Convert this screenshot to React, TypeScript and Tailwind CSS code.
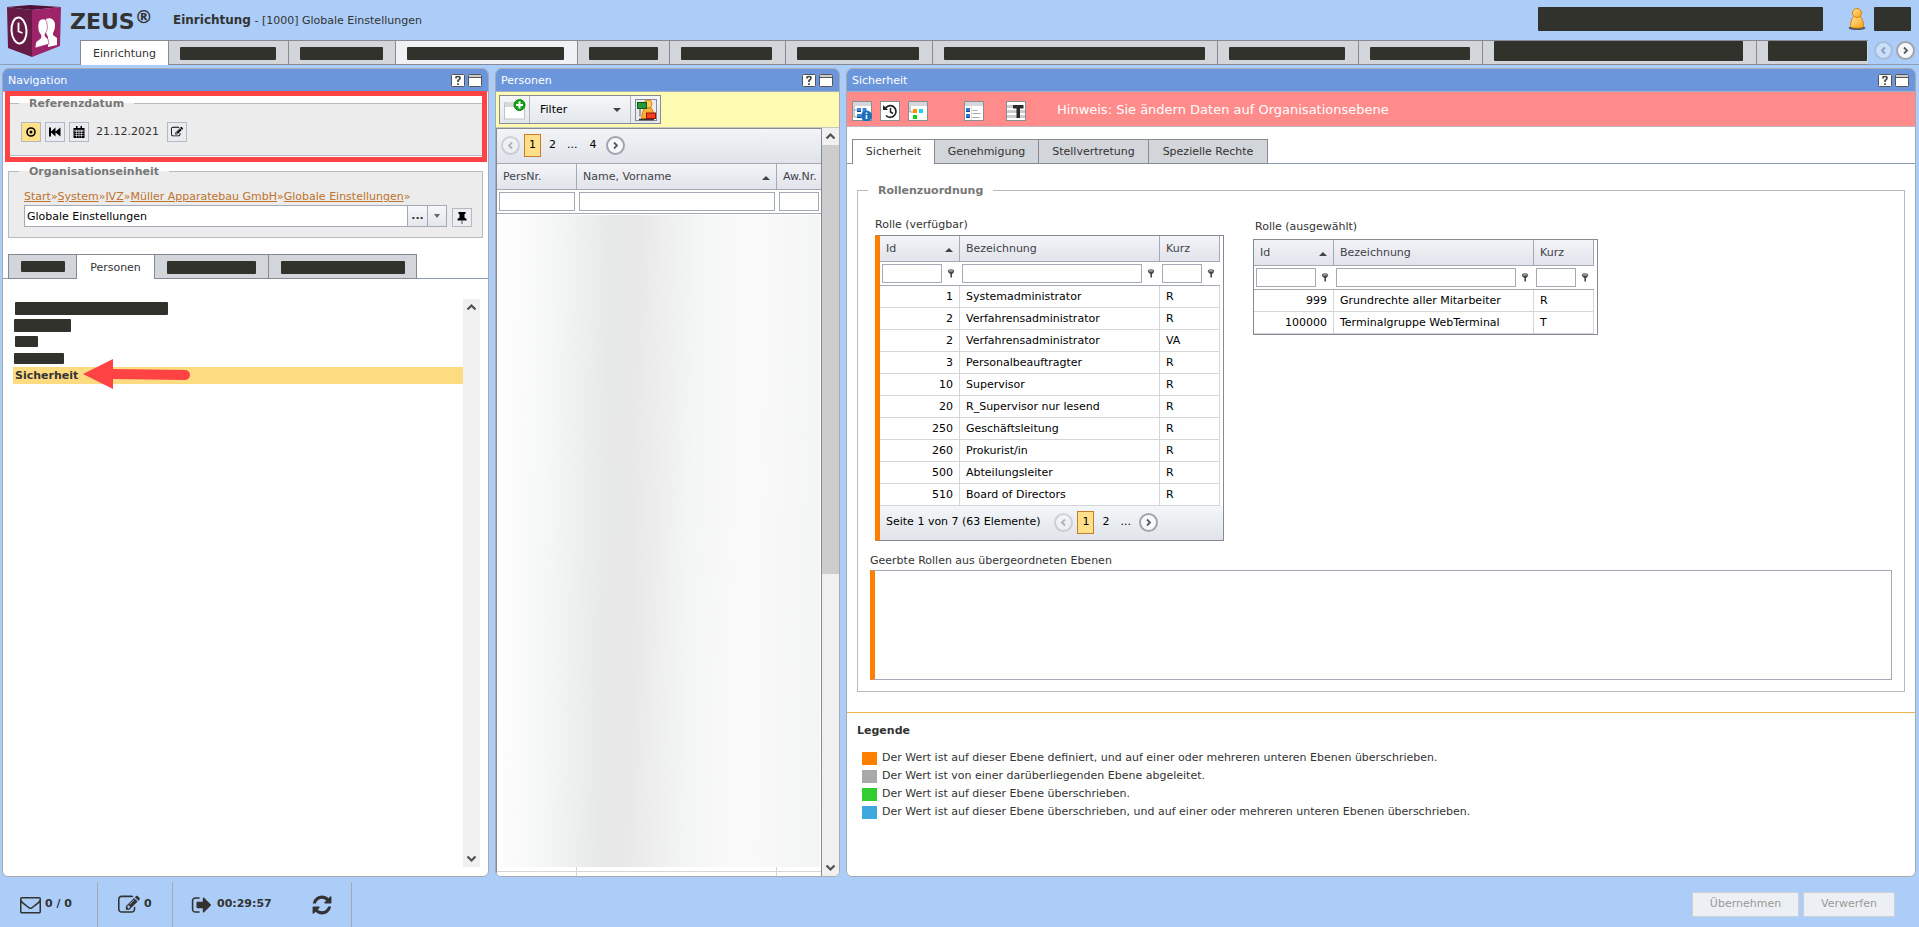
import type { ReactNode } from "react";
import clsx from "clsx";

// Black bars stand in for hidden labels
function Redacted({ className }: { className: string }) {
  return <span className={clsx("block shrink-0 rounded-[1px] bg-[#31322b]", className)} />;
}

const headerTabs = [
  { bar: "h-[13px] w-24", tab: "w-[120px]" },
  { bar: "h-[13px] w-[83px]", tab: "w-[107px]" },
  { bar: "h-[13px] w-[157px]", tab: "w-[182px]", hover: true },
  { bar: "h-[13px] w-[69px]", tab: "w-[92px]" },
  { bar: "h-[13px] w-[91px]", tab: "w-[116px]" },
  { bar: "h-[13px] w-[122px]", tab: "w-[147px]" },
  { bar: "h-[13px] w-[261px]", tab: "w-[285px]" },
  { bar: "h-[13px] w-[116px]", tab: "w-[141px]" },
  { bar: "h-[13px] w-[100px]", tab: "w-[124px]" },
  { bar: "h-5 w-[249px]", tab: "w-[274px]" },
  { bar: "h-5 w-[99px]", tab: "w-[111px]" },
];

const availableRoles = [
  ["1", "Systemadministrator", "R"],
  ["2", "Verfahrensadministrator", "R"],
  ["2", "Verfahrensadministrator", "VA"],
  ["3", "Personalbeauftragter", "R"],
  ["10", "Supervisor", "R"],
  ["20", "R_Supervisor nur lesend", "R"],
  ["250", "Geschäftsleitung", "R"],
  ["260", "Prokurist/in", "R"],
  ["500", "Abteilungsleiter", "R"],
  ["510", "Board of Directors", "R"],
];

const selectedRoles = [
  ["999", "Grundrechte aller Mitarbeiter", "R"],
  ["100000", "Terminalgruppe WebTerminal", "T"],
];

const legendItems = [
  { color: "bg-[#ff8000]", text: "Der Wert ist auf dieser Ebene definiert, und auf einer oder mehreren unteren Ebenen überschrieben." },
  { color: "bg-[#a9a9a9]", text: "Der Wert ist von einer darüberliegenden Ebene abgeleitet." },
  { color: "bg-[#32cd32]", text: "Der Wert ist auf dieser Ebene überschrieben." },
  { color: "bg-[#3fa9de]", text: "Der Wert ist auf dieser Ebene überschrieben, und auf einer oder mehreren unteren Ebenen überschrieben." },
];

const editPath =
  "M888 1184l116-116-152-152-116 116v56h96v96h56zm440-720q-16-16-33 1l-350 350q-17 17-1 33t33-1l350-350q17-17 1-33zm80 594v190q0 119-84.5 203.5t-203.5 84.5h-832q-119 0-203.5-84.5t-84.5-203.5v-832q0-119 84.5-203.5t203.5-84.5h832q63 0 117 25 15 7 18 23 3 17-9 29l-49 49q-14 14-32 8-23-6-45-6h-832q-66 0-113 47t-47 113v832q0 66 47 113t113 47h832q66 0 113-47t47-113v-126q0-13 9-22l64-64q15-15 35-7t20 29zm-96-738l288 288-672 672h-288v-288zm444 132l-92 92-288-288 92-92q28-28 68-28t68 28l152 152q28 28 28 68t-28 68z";
const refreshPath =
  "M1639 1056q0 5-1 7-64 268-268 434.5t-478 166.5q-146 0-282.5-55t-243.5-157l-129 129q-19 19-45 19t-45-19-19-45v-448q0-26 19-45t45-19h448q26 0 45 19t19 45-19 45l-137 137q71 66 161 102t187 36q134 0 250-65t186-179q11-17 53-117 8-23 30-23h192q13 0 22.5 9.5t9.5 22.5zm25-800v448q0 26-19 45t-45 19h-448q-26 0-45-19t-19-45 19-45l138-138q-148-137-349-137-134 0-250 65t-186 179q-11 17-53 117-8 23-30 23h-199q-13 0-22.5-9.5t-9.5-22.5v-7q65-268 270-434.5t480-166.5q146 0 284 55.5t245 156.5l130-129q19-19 45-19t45 19 19 45z";
const signOutPath =
  "M704 1440q0 4 1 20t.5 26.5-3 23.5-10 19.5-20.5 6.5h-320q-119 0-203.5-84.5t-84.5-203.5v-704q0-119 84.5-203.5t203.5-84.5h320q13 0 22.5 9.5t9.5 22.5q0 4 1 20t.5 26.5-3 23.5-10 19.5-20.5 6.5h-320q-66 0-113 47t-47 113v704q0 66 47 113t113 47h312l11.5 1 11.5 3 8 5.5 7 9 2 13.5zm928-544q0 26-19 45l-544 544q-19 19-45 19t-45-19-19-45v-288h-448q-26 0-45-19t-19-45v-384q0-26 19-45t45-19h448v-288q0-26 19-45t45-19 45 19l544 544q19 19 19 45z";
const mailPath =
  "M1664 1504v-768q-32 36-69 66-268 206-426 338-51 43-83 67t-86.5 48.5-102.5 24.5h-2q-48 0-102.5-24.5t-86.5-48.5-83-67q-158-132-426-338-37-30-69-66v768q0 13 9.5 22.5t22.5 9.5h1472q13 0 22.5-9.5t9.5-22.5zm0-1051v-24.5l-.5-13-3-12.5-5.5-9-9-7.5-14-2.5h-1472q-13 0-22.5 9.5t-9.5 22.5q0 168 147 284 193 152 401 317 6 5 35 29.5t46 37.5 44.5 31.5 50.5 27.5 43 9h2q20 0 43-9t50.5-27.5 44.5-31.5 46-37.5 35-29.5q208-165 401-317 54-43 100.5-115.5t46.5-131.5zm128-37v1088q0 66-47 113t-113 47h-1472q-66 0-113-47t-47-113v-1088q0-66 47-113t113-47h1472q66 0 113 47t47 113z";

function Glyph({ d, className }: { d: string; className: string }) {
  return (
    <svg viewBox="0 0 1792 1792" fill="currentColor" className={className} aria-hidden="true">
      <path d={d} />
    </svg>
  );
}

function Logo() {
  return (
    <svg viewBox="0 0 56 54" className="h-[54px] w-14 shrink-0" aria-hidden="true">
      <path d="M1 2 24 0 55 2 26 5Z" fill="#4f1236" />
      <path d="M1 2 26 5 26 52 2 43Z" fill="#651b45" />
      <path d="M26 5 55 2 54 41 26 52Z" fill="#9e2469" />
      <ellipse cx="13" cy="25.500" rx="7.500" ry="13" fill="none" stroke="#fff" strokeWidth="2" transform="rotate(-4 13 25.500)" />
      <path d="M12.500 17.500v9l4 1.500" fill="none" stroke="#fff" strokeWidth="1.800" />
      <path d="M40 14c4-2 9 0 9 6 0 4-1 6-2 8l0 2 4 3 0 7-9 2 0-10-4-8Z" fill="#fff" />
      <path d="M37 14c-4 0-5 4-5 8 0 3 1 6 3 8l0 3-5 4-1 6 14-4-1-5-3-3 0-2c2-3 3-6 2-10 0-3-1-5-4-5Z" fill="#fff" stroke="#9e2469" strokeWidth="0.600" />
    </svg>
  );
}

function UserIcon() {
  return (
    <svg viewBox="0 0 18 24" className="h-6 w-[18px] shrink-0" aria-hidden="true">
      <defs>
        <linearGradient id="user-body" x1="0" y1="0" x2="1" y2="1">
          <stop offset="0" stopColor="#ffe3a8" />
          <stop offset="1" stopColor="#f8a30c" />
        </linearGradient>
      </defs>
      <ellipse cx="9" cy="21" rx="8.500" ry="2" fill="#4c5b70" />
      <path d="M5.500 9.500h7c2 3 3 6 3 9 0 2-2 2.500-6.500 2.500S2.500 20.500 2.500 18.500c0-3 1-6 3-9Z" fill="url(#user-body)" stroke="#d98200" />
      <circle cx="9" cy="6" r="4.500" fill="url(#user-body)" stroke="#d98200" />
    </svg>
  );
}

function Chevron({ up }: { up?: boolean }) {
  return (
    <svg viewBox="0 0 17 17" className="block size-[17px]" aria-hidden="true">
      <path d={up ? "M4.500 10.500 8.500 6.500 12.500 10.500" : "M4.500 6.500 8.500 10.500 12.500 6.500"} fill="none" stroke="#505050" strokeWidth="2.200" />
    </svg>
  );
}

function RoundButton({ dir, disabled, label }: { dir: "left" | "right"; disabled?: boolean; label: string }) {
  return (
    <button
      type="button"
      aria-label={label}
      disabled={disabled}
      className={clsx(
        "flex size-[19px] shrink-0 items-center justify-center rounded-full border-2 border-[#a0a5ae] bg-[#f6f8fa]",
        disabled && "opacity-40"
      )}
    >
      <svg viewBox="0 0 9 9" className="size-[9px]" aria-hidden="true">
        <path d={dir === "left" ? "M6 1.500 3 4.500 6 7.500" : "M3 1.500 6 4.500 3 7.500"} fill="none" stroke="#555b66" strokeWidth="1.800" />
      </svg>
    </button>
  );
}

function SortArrow() {
  return <span className="border-x-4 border-b-4 border-x-transparent border-b-[#3f4247]" />;
}

function Panel({ title, className, children }: { title: string; className: string; children: ReactNode }) {
  return (
    <section className={clsx("flex min-h-0 flex-col overflow-hidden rounded-md border border-[#a6abb3] bg-white", className)}>
      <header className="flex h-[23px] shrink-0 items-center border-b border-[#a6b0c4] bg-[#6b96dc] pt-px pr-[6px] pl-[5px] text-white">
        <h2 className="grow pt-px text-[11px]">{title}</h2>
        <button type="button" aria-label="Hilfe" className="mr-[3px]">
          <svg viewBox="0 0 14 13" className="block h-[13px] w-[14px]" aria-hidden="true">
            <rect x="0.500" y="0.500" width="13" height="12" rx="1" fill="#fff" stroke="#555" />
            <path d="M5 4.500V3.500Q5 2.500 7 2.500T9 4Q9 5.500 7 6.500V8M7 9.200v1.800" fill="none" stroke="#444" strokeWidth="1.700" />
          </svg>
        </button>
        <button type="button" aria-label="Maximieren">
          <svg viewBox="0 0 14 13" className="block h-[13px] w-[14px]" aria-hidden="true">
            <rect x="0.500" y="0.500" width="13" height="12" rx="1" fill="#fff" stroke="#555" />
            <path d="M1 1h12v2H1z" fill="#ccc" />
            <path d="M1 3.500h12" stroke="#555" />
          </svg>
        </button>
      </header>
      {children}
    </section>
  );
}

function Group({ title, className, bodyClass, children }: { title: string; className?: string; bodyClass: string; children: ReactNode }) {
  return (
    <fieldset className={clsx("min-w-0 border border-[#b7bac1]", className)}>
      <legend className="ml-[10px] px-[10px] pt-0.5 text-[11px] leading-[14px] font-bold text-[#777]">{title}</legend>
      <div className={bodyClass}>{children}</div>
    </fieldset>
  );
}

function ToolButton({ label, active, children }: { label: string; active?: boolean; children: ReactNode }) {
  return (
    <button
      type="button"
      aria-label={label}
      className={clsx(
        "flex size-5 shrink-0 items-center justify-center border border-[#b4b9c2] text-black",
        active ? "bg-[#ffe08a]" : "bg-[#e8ebf0]"
      )}
    >
      {children}
    </button>
  );
}

function FilterCell({ label, className }: { label: string; className: string }) {
  return (
    <td className="border-b border-[#a5a9b4] p-0">
      <div className="flex items-center">
        <input type="text" aria-label={label} className={clsx("ml-0.5 h-[19px] border border-[#a5a9b4] bg-white px-1", className)} />
        <button type="button" aria-label={`${label} Filteroptionen`} className="ml-[5px]">
          <svg viewBox="0 0 8 9" className="block h-[9px] w-2" aria-hidden="true">
            <ellipse cx="4" cy="2" rx="3" ry="1.200" fill="#ccc" stroke="#444" strokeWidth="0.900" />
            <path d="M.8 2.800h6.400L5 5.200V8.500H3.400V5.200Z" fill="#444" />
          </svg>
        </button>
      </div>
    </td>
  );
}

function RoleTable({ rows, label }: { rows: string[][]; label: string }) {
  return (
    <table aria-label={label} className="w-[340px] table-fixed border-separate border-spacing-0 text-black">
      <colgroup>
        <col className="w-20" />
        <col className="w-[200px]" />
        <col className="w-[60px]" />
      </colgroup>
      <thead>
        <tr className="h-[26px] bg-linear-to-b from-[#f3f4f8] to-[#e0e3ea] text-left text-[#3f4247]">
          <th className="border-r border-b border-[#a5a9b4] px-1.5 pt-0.5 font-normal">
            <span className="flex items-center justify-between">
              Id <SortArrow />
            </span>
          </th>
          <th className="border-r border-b border-[#a5a9b4] px-1.5 pt-0.5 font-normal">Bezeichnung</th>
          <th className="border-r border-b border-[#a5a9b4] px-1.5 pt-0.5 font-normal">Kurz</th>
        </tr>
      </thead>
      <tbody>
        <tr className="h-6">
          <FilterCell label="Id" className="w-[60px]" />
          <FilterCell label="Bezeichnung" className="w-[180px]" />
          <FilterCell label="Kurz" className="w-10" />
        </tr>
        {rows.map(([id, name, short], i) => (
          <tr key={i} className="h-[22px]">
            <td className="border-r border-b border-[#d5d6da] px-1.5 pt-0.5 pb-0 text-right">{id}</td>
            <td className="border-r border-b border-[#d5d6da] px-1.5 pt-0.5 pb-0">{name}</td>
            <td className="border-r border-b border-[#d5d6da] px-1.5 pt-0.5 pb-0">{short}</td>
          </tr>
        ))}
      </tbody>
    </table>
  );
}

function PageNumber({ n, current }: { n: string; current?: boolean }) {
  return (
    <button
      type="button"
      className={clsx(
        "flex h-[23px] w-[17px] items-center justify-center border",
        current ? "border-[#c67c2a] bg-[#ffe08a]" : "border-transparent"
      )}
    >
      {n}
    </button>
  );
}

function TopBar() {
  return (
    <header className="shrink-0">
      <div className="flex h-10 items-start">
        <div className="h-10 w-16 pt-[5px] pl-1.5">
          <Logo />
        </div>
        <h1 className="flex w-[109px] pt-1.5 pl-1.5 text-[22px] leading-8 font-bold">
          ZEUS
          <span className="text-[18px] leading-[22px]">®</span>
        </h1>
        <p className="grow pt-3 leading-4">
          <b className="text-xs leading-4">Einrichtung</b> - [1000] Globale Einstellungen
        </p>
        <div className="flex items-start pt-[7px] pr-2">
          <Redacted className="h-6 w-[285px]" />
          <span className="mr-2 ml-[25px]">
            <UserIcon />
          </span>
          <Redacted className="h-6 w-[37px]" />
        </div>
      </div>
      <div className="flex h-[25px] border-b border-[#8b9dbb] pl-20">
        <nav className="flex h-[25px] min-w-0 overflow-hidden border-t border-l border-[#868a92]">
          <a href="#einrichtung" className="flex w-[88px] shrink-0 items-center justify-center border-r border-[#868a92] bg-white pt-0.5">
            Einrichtung
          </a>
          {headerTabs.map((t, i) => (
            <a
              key={i}
              href="#"
              aria-label={`Bereich ${i + 2}`}
              className={clsx(
                "flex shrink-0 border-b border-[#868a92] pl-[11px]",
                t.tab,
                t.hover ? "bg-[#eff1f5]" : "bg-[#d2d5da]",
                i < 9 && "items-center pt-px",
                i < headerTabs.length - 1 && "border-r"
              )}
            >
              <Redacted className={t.bar} />
            </a>
          ))}
        </nav>
        <div className="flex shrink-0 items-start gap-[3px] pt-px pr-1 pl-1.5">
          <RoundButton dir="left" disabled label="Tabs zurück" />
          <RoundButton dir="right" label="Tabs vor" />
        </div>
      </div>
    </header>
  );
}

function Navigation() {
  return (
    <Panel title="Navigation" className="relative w-[487px] shrink-0">
      <div className="px-[5px] pt-[3px]">
        <Group title="Referenzdatum" className="bg-[#ececec]" bodyClass="px-3 pt-[11px] pb-[13px]">
          <div className="flex items-center">
            <div className="flex gap-1">
              <ToolButton label="Heute" active>
                <svg viewBox="0 0 10 10" className="size-[10px]" aria-hidden="true">
                  <circle cx="5" cy="5" r="4" fill="none" stroke="#000" strokeWidth="1.600" />
                  <circle cx="5" cy="5" r="1.500" />
                </svg>
              </ToolButton>
              <ToolButton label="Zurück">
                <svg viewBox="0 0 12 10" className="h-[10px] w-3" aria-hidden="true">
                  <path d="M0 .5h2v4L6.500.5v4L11.500.5v9L6.500 5.500v4L2 5.500v4H0z" />
                </svg>
              </ToolButton>
              <ToolButton label="Kalender">
                <svg viewBox="0 0 12 12" className="size-3" aria-hidden="true">
                  <path d="M.5 2h11v10H.5zM3 0h1.500v3H3zM7.500 0H9v3H7.500z" />
                  <path d="M1.500 5.500h9M1.500 7.500h9M1.500 9.500h9M3.500 4.500v7M6 4.500v7M8.500 4.500v7" stroke="#e8ebf0" strokeWidth="0.600" />
                  <path d="M1.300 4.300h9.400" stroke="#e8ebf0" strokeWidth="0.800" />
                </svg>
              </ToolButton>
            </div>
            <span className="mr-2 ml-[7px] text-[11px]">21.12.2021</span>
            <ToolButton label="Datum bearbeiten">
              <Glyph d={editPath} className="size-3" />
            </ToolButton>
          </div>
        </Group>
        <Group title="Organisationseinheit" className="mt-[7px] bg-[#ececec]" bodyClass="pt-[10px] pr-2.5 pb-[10px] pl-[15px]">
          <nav className="leading-4 whitespace-nowrap text-[#c0722a]">
            {["Start", "System", "IVZ", "Müller Apparatebau GmbH", "Globale Einstellungen"].map((c) => (
              <span key={c}>
                <a href="#" className="underline">{c}</a>»
              </span>
            ))}
          </nav>
          <div className="flex items-end gap-[5px]">
            <div className="flex h-[22px] grow border border-[#a5a9b4] bg-white">
              <input type="text" aria-label="Organisationseinheit" defaultValue="Globale Einstellungen" className="min-w-0 grow px-0.5 pt-[3px] text-black" />
              <button type="button" aria-label="Auswählen" className="w-5 border-l border-[#a5a9b4] bg-linear-to-b from-[#f6f7f9] to-[#e3e7ec] font-bold">...</button>
              <button type="button" aria-label="Liste öffnen" className="flex w-[19px] items-center justify-center border-l border-[#a5a9b4] bg-linear-to-b from-[#f6f7f9] to-[#e3e7ec]">
                <span className="border-x-[3px] border-t-4 border-x-transparent border-t-[#60646b]" />
              </button>
            </div>
            <button type="button" aria-label="Anheften" className="flex h-[19px] w-5 items-center justify-center border border-[#b4b9c2] bg-[#eceef2]">
              <svg viewBox="0 0 10 12" className="h-3 w-[10px]" aria-hidden="true">
                <path d="M1.500 0h7v2h-1v3.500L9.500 7v1.500H.5V7l2-1.500V2h-1z" fill="#000" />
                <path d="M5 8.500V12" stroke="#555" />
              </svg>
            </button>
          </div>
        </Group>
      </div>

      <div className="mt-4 flex border-b border-[#8b9dbb] pl-[5px]">
        <div role="tablist" className="-mb-px flex h-[25px] border-l border-[#868a92]">
          <button type="button" role="tab" aria-label="Bereich 1" className="flex w-[68px] items-center border-y border-r border-[#868a92] bg-[#d2d5da] pl-3 pb-px">
            <Redacted className="h-[11px] w-11" />
          </button>
          <button type="button" role="tab" aria-selected="true" className="w-[78px] border-t border-r border-[#868a92] bg-white pt-0.5">Personen</button>
          <button type="button" role="tab" aria-label="Bereich 3" className="flex w-[114px] items-center border-y border-r border-[#868a92] bg-[#d2d5da] pt-px pl-3">
            <Redacted className="h-[13px] w-[89px]" />
          </button>
          <button type="button" role="tab" aria-label="Bereich 4" className="flex w-[148px] items-center border-y border-r border-[#868a92] bg-[#d2d5da] pt-px pl-3">
            <Redacted className="h-[13px] w-[124px]" />
          </button>
        </div>
      </div>

      <div className="mt-5 mr-2 mb-[9px] ml-[10px] flex min-h-0 grow">
        <ul className="grow">
          <li className="h-[17px] pt-[3px] pl-0.5"><Redacted className="h-[13px] w-[153px]" /></li>
          <li className="h-[17px] pt-[3px] pl-px"><Redacted className="h-[13px] w-[57px]" /></li>
          <li className="h-[17px] pt-[3px] pl-0.5"><Redacted className="h-[11px] w-[23px]" /></li>
          <li className="h-[17px] pt-[3px] pl-px"><Redacted className="h-[11px] w-[50px]" /></li>
          <li className="relative h-[17px] bg-[#fddb80] pt-px pl-0.5 leading-4">
            <a href="#sicherheit" className="text-[11px] font-bold">Sicherheit</a>
            {/* Pointer to the active entry */}
            <svg viewBox="0 0 108 30" className="absolute -top-2 left-[70px] h-[30px] w-[108px]" aria-hidden="true">
              <path d="M0 15 30 0V10L102 11A5 5 0 0 1 102 21L30 20V30Z" fill="#ff4244" />
            </svg>
          </li>
        </ul>
        <div className="flex w-[17px] flex-col justify-between bg-[#f0f0f0]">
          <Chevron up />
          <Chevron />
        </div>
      </div>

      {/* Highlight frame around the reference date */}
      <div className="pointer-events-none absolute top-[22px] right-px left-0.5 h-[71px] border-[5px] border-[#ff4244]" />
    </Panel>
  );
}

function Persons() {
  return (
    <Panel title="Personen" className="w-[345px] shrink-0">
      <div className="flex h-9 shrink-0 items-start border-b border-[#c8c8c0] bg-[#fffab2] pt-[3px] pl-[3px]">
        <div className="flex h-[29px] border border-[#868a92] bg-linear-to-b from-[#f6f7f9] to-[#e3e7ec]">
          <button type="button" aria-label="Neu" className="flex w-[30px] items-center justify-center border-r border-[#b0b4bc]">
            <svg viewBox="0 0 22 22" className="size-[22px]" aria-hidden="true">
              <rect x="0.500" y="4" width="20" height="16" fill="#fff" stroke="#bfc3c8" />
              <path d="M1 4h19v4H1z" fill="#d5d7da" />
              <circle cx="15.500" cy="6" r="5.500" fill="#1aa31a" stroke="#0c8210" />
              <path d="M15.500 2.500v7M12 6h7" stroke="#fff" strokeWidth="2" />
            </svg>
          </button>
          <button type="button" className="flex w-[101px] items-center justify-between border-r border-[#b0b4bc] pt-px pr-[9px] pl-2.5 text-black">
            Filter
            <span className="border-x-4 border-t-4 border-x-transparent border-t-[#3f4247]" />
          </button>
          <button type="button" aria-label="Person wechseln" className="flex w-[29px] items-center justify-center">
            <svg viewBox="0 0 22 22" className="size-[22px]" aria-hidden="true">
              <rect x="0.500" y="0.500" width="21" height="21" fill="#e9ebef" stroke="#868a92" />
              <circle cx="13" cy="5" r="4" fill="#ffc766" stroke="#d98200" />
              <path d="M9.500 9h7q3 5 3 10.500h-13Q7 13 9.500 9Z" fill="#fbb033" stroke="#d98200" />
              <path d="M4 20.500h15" stroke="#333" strokeWidth="1.500" />
              <rect x="2.500" y="3.500" width="9" height="6" fill="#26983a" stroke="#0a5d16" />
              <path d="M5 9.500v8" stroke="#555" />
              <rect x="11.500" y="14" width="9" height="5.500" fill="#f2401e" stroke="#981005" />
            </svg>
          </button>
        </div>
      </div>
      <div className="flex min-h-0 grow">
        <div className="flex min-w-0 grow flex-col border-x border-t border-[#868a92]">
          <div className="flex h-[35px] shrink-0 items-center border-b border-[#a5a9b4] bg-linear-to-b from-[#f2f4f6] to-[#e0e3ea] pb-px pl-1 text-black">
            <RoundButton dir="left" disabled label="Vorherige Seite" />
            <div className="mr-1 ml-1 flex items-center">
              <PageNumber n="1" current />
              <span className="ml-[3px]"><PageNumber n="2" /></span>
              <span className="ml-[6px]">...</span>
              <span className="ml-[7px]"><PageNumber n="4" /></span>
            </div>
            <RoundButton dir="right" label="Nächste Seite" />
          </div>
          <table aria-label="Personen" className="w-full shrink-0 table-fixed border-separate border-spacing-0">
            <colgroup>
              <col className="w-20" />
              <col className="w-[200px]" />
              <col />
            </colgroup>
            <thead>
              <tr className="h-[26px] bg-linear-to-b from-[#f3f4f8] to-[#e0e3ea] text-left text-[#3f4247]">
                <th className="border-r border-b border-[#a5a9b4] px-1.5 pt-0.5 font-normal">PersNr.</th>
                <th className="border-r border-b border-[#a5a9b4] px-1.5 pt-0.5 font-normal">
                  <span className="flex items-center justify-between">
                    Name, Vorname <SortArrow />
                  </span>
                </th>
                <th className="border-b border-[#a5a9b4] pt-0.5 pl-1.5 font-normal whitespace-nowrap">Aw.Nr.</th>
              </tr>
            </thead>
            <tbody>
              <tr className="h-6">
                {["PersNr.", "Name, Vorname", "Aw.Nr."].map((l) => (
                  <td key={l} className="border-b border-[#a5a9b4] px-0.5 py-0">
                    <input type="text" aria-label={l} className="block h-[19px] w-full border border-[#a5a9b4] bg-white px-1" />
                  </td>
                ))}
              </tr>
            </tbody>
          </table>
          <div className="mt-px mr-px min-h-0 grow bg-[linear-gradient(91deg,#fdfdfd_4%,#f5f6f6_17%,#e7e8e8_34%,#e8e8e8_42%,#f4f5f5_60%,#fafafa_76%,#f3f4f4_100%)]" />
          <div className="flex h-[9px] shrink-0 flex-col">
            <div className="flex h-[5px] border-b border-[#d5d6da]">
              <span className="w-20 border-r border-[#d5d6da]" />
              <span className="w-[200px] border-r border-[#d5d6da]" />
            </div>
            <div className="flex grow">
              <span className="w-20 border-r border-[#d5d6da]" />
              <span className="w-[200px] border-r border-[#d5d6da]" />
            </div>
          </div>
        </div>
        <div className="flex w-[17px] shrink-0 flex-col bg-[#f0f0f0]">
          <Chevron up />
          <div className="h-[429px] bg-[#cdcdcd]" />
          <div className="mt-auto">
            <Chevron />
          </div>
        </div>
      </div>
    </Panel>
  );
}

function BarIcon({ label, children }: { label: string; children: ReactNode }) {
  return (
    <button type="button" aria-label={label} className="size-5">
      <svg viewBox="0 0 20 20" className="block size-5" aria-hidden="true">
        <rect x="0.500" y="0.500" width="19" height="19" fill="#fff" stroke="#8a8d92" />
        {children}
      </svg>
    </button>
  );
}

function Security() {
  return (
    <Panel title="Sicherheit" className="min-w-0 grow">
      <div className="flex h-[35px] shrink-0 items-center border-b border-[#c3b7bf] bg-[#ff8b8b] pl-[5px]">
        <div className="flex gap-2 pt-[3px]">
          <BarIcon label="Information">
            <path d="M1 1h18v4H1z" fill="#d5d7da" />
            <path d="M2 5v11h3M2 9h3" fill="none" stroke="#9a9a9a" />
            <path d="M5 7h4v4H5zM10.500 7h4v4h-4zM5 13h4v4H5z" fill="#3c86d8" />
            <path d="M5 10h4v1H5zM5 16h4v1H5z" fill="#123f86" />
            <circle cx="14.500" cy="15" r="5.500" fill="#1d6fb8" />
            <path d="M14.500 14v4M14.500 11.500v1.500" stroke="#fff" strokeWidth="1.600" />
          </BarIcon>
          <BarIcon label="Verlauf">
            <path d="M5.200 7.500A5.800 5.800 0 1 1 6 14.500" fill="none" stroke="#222" strokeWidth="1.700" />
            <path d="M3 4v5h5Z" fill="#222" />
            <path d="M10.500 7v4l2.500 1.500" fill="none" stroke="#222" strokeWidth="1.500" />
          </BarIcon>
          <BarIcon label="Struktur">
            <path d="M1 1h18v4H1z" fill="#d5d7da" />
            <path d="M2 5v6h3" fill="none" stroke="#9a9a9a" />
            <path d="M5 8h4v4H5z" fill="#ff9000" />
            <path d="M11 8h4v4h-4z" fill="#18d8e8" />
            <path d="M5 14h4v4H5z" fill="#0fd21f" />
          </BarIcon>
          <span className="w-5" />
          <BarIcon label="Liste">
            <path d="M1 1h18v4H1z" fill="#d5d7da" />
            <path d="M2 7h4v4H2zM2 13h4v4H2z" fill="#2f77cf" />
            <path d="M2 10h4v1H2zM2 16h4v1H2z" fill="#123f86" />
            <path d="M8.500 9.500h5M8.500 12.500h8M8.500 16.500h7" stroke="#aaa" />
            <path d="M7.500 6v13" stroke="#ddd" />
          </BarIcon>
          <span className="ml-[6px] h-5 w-[28px] pl-2">
            <BarIcon label="Text">
              <path d="M1 4h8v3H1zM1 9h18v3H1zM1 14h18v3H1z" fill="#ccc" />
              <path d="M7 4h10.500v3.500h-3.500v9.500h-3.500V7.500H7z" fill="#2b2b2b" />
            </BarIcon>
          </span>
        </div>
        <p className="ml-[31px] pt-0.5 text-[13px] text-white">Hinweis: Sie ändern Daten auf Organisationsebene</p>
      </div>

      <div className="mt-3 flex border-b border-[#8b9dbb] pl-[5px]">
        <div role="tablist" className="-mb-px flex h-[25px] border-l border-[#868a92]">
          <button type="button" role="tab" aria-selected="true" className="w-[82px] border-t border-r border-[#868a92] bg-white pt-px">Sicherheit</button>
          <button type="button" role="tab" className="w-[104px] border-y border-r border-[#868a92] bg-[#d2d5da] pt-0.5">Genehmigung</button>
          <button type="button" role="tab" className="w-[110px] border-y border-r border-[#868a92] bg-[#d2d5da] pt-0.5">Stellvertretung</button>
          <button type="button" role="tab" className="w-[119px] border-y border-r border-[#868a92] bg-[#d2d5da] pt-0.5">Spezielle Rechte</button>
        </div>
      </div>

      <div className="border-b border-[#e9b44c] px-[10px] pt-[18px] pb-5">
        <Group title="Rollenzuordnung" bodyClass="px-3 pb-[11px]">
          <div className="flex gap-[29px] pt-[19px] pl-[5px]">
            <div>
              <p className="leading-4">Rolle (verfügbar)</p>
              <div className="mt-0.5 w-[349px] border border-l-[5px] border-[#868a92] border-l-[#ff8000]">
                <RoleTable rows={availableRoles} label="Rolle (verfügbar)" />
                <div className="flex h-[34px] items-center bg-linear-to-b from-[#f4f7f8] to-[#e0e4ea] pb-px pl-1.5 text-black">
                  <span className="mr-[14px]">Seite 1 von 7 (63 Elemente)</span>
                  <RoundButton dir="left" disabled label="Vorherige Seite" />
                  <div className="mr-2 ml-1 flex items-center">
                    <PageNumber n="1" current />
                    <span className="ml-[3px]"><PageNumber n="2" /></span>
                    <span className="ml-[6px]">...</span>
                  </div>
                  <RoundButton dir="right" label="Nächste Seite" />
                </div>
              </div>
            </div>
            <div className="pt-0.5">
              <p className="pl-0.5 leading-4">Rolle (ausgewählt)</p>
              <div className="mt-1 w-[345px] border border-[#868a92]">
                <RoleTable rows={selectedRoles} label="Rolle (ausgewählt)" />
              </div>
            </div>
          </div>
          <label htmlFor="inherited" className="mt-3 block leading-4">
            Geerbte Rollen aus übergeordneten Ebenen
          </label>
          <textarea id="inherited" readOnly className="mt-px block h-[110px] w-full resize-none border border-l-[5px] border-[#a5a9b4] border-l-[#ff8000]" />
        </Group>
      </div>

      <div className="px-[10px] pt-[10px]">
        <h3 className="text-[11px] leading-4 font-bold">Legende</h3>
        <ul className="mt-[10px] pl-[5px]">
          {legendItems.map((item) => (
            <li key={item.color} className="flex h-[18px] items-center gap-[5px]">
              <span className={clsx("h-[13px] w-[15px] shrink-0", item.color)} />
              {item.text}
            </li>
          ))}
        </ul>
      </div>
    </Panel>
  );
}

function StatusBar() {
  return (
    <footer className="flex h-[50px] shrink-0 items-stretch pt-[5px] text-[11px] font-bold">
      <div className="flex w-[98px] items-center gap-1 border-r border-[#a3a9b3] pl-5">
        <Glyph d={mailPath} className="size-[21px]" /> 0 / 0
      </div>
      <div className="flex w-[75px] items-center gap-1 border-r border-[#a3a9b3] pl-5">
        <Glyph d={editPath} className="size-[22px]" /> 0
      </div>
      <div className="flex w-[179px] items-center border-r border-[#a3a9b3] pl-[18px]">
        <Glyph d={signOutPath} className="mr-1 size-[22px]" /> 00:29:57
        <button type="button" aria-label="Aktualisieren" className="mr-[18px] ml-auto">
          <Glyph d={refreshPath} className="size-[22px]" />
        </button>
      </div>
      <div className="ml-auto flex items-center gap-1 pr-6">
        <button type="button" disabled className="h-[25px] w-[107px] border border-[#ccd0d4] bg-[#ecf0f4] font-normal text-[#999]">Übernehmen</button>
        <button type="button" disabled className="h-[25px] w-[92px] border border-[#ccd0d4] bg-[#ecf0f4] font-normal text-[#999]">Verwerfen</button>
      </div>
    </footer>
  );
}

export default function App() {
  return (
    <div className="flex h-screen flex-col overflow-hidden bg-[#abcdf7] font-['DejaVu_Sans',Verdana,sans-serif] text-[11px] text-[#333]">
      <TopBar />
      <main className="flex min-h-0 grow gap-1.5 pt-[3px] pr-[3px] pl-0.5">
        <Navigation />
        <Persons />
        <Security />
      </main>
      <StatusBar />
    </div>
  );
}
